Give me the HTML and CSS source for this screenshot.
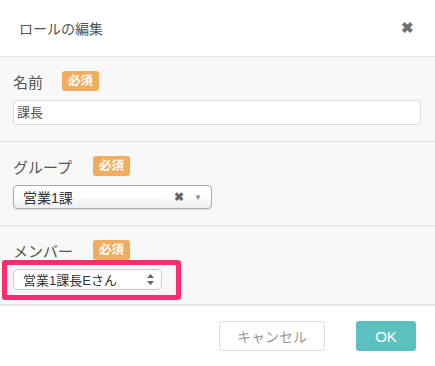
FILE: index.html
```html
<!DOCTYPE html>
<html lang="ja">
<head>
    <meta charset="UTF-8">
    <title>ロールの編集</title>
    <link rel="stylesheet" href="styles.css">
</head>
<body>
    <div class="modal">
        <div class="modal-header">
            <span class="modal-title">ロールの編集</span>
            <span class="close">&#10006;</span>
        </div>

        <div class="modal-body">
            <!-- 名前 -->
            <div class="section">
                <div class="label-row">
                    <span class="label">名前</span>
                    <span class="badge">必須</span>
                </div>
                <div class="text-input">課長</div>
            </div>

            <!-- グループ -->
            <div class="section">
                <div class="label-row">
                    <span class="label">グループ</span>
                    <span class="badge">必須</span>
                </div>
                <div class="select2">
                    <span class="select2-text">営業1課</span>
                    <span class="select2-clear">&#10006;</span>
                    <span class="select2-arrow">&#9660;</span>
                </div>
            </div>

            <!-- メンバー -->
            <div class="section last">
                <div class="label-row">
                    <span class="label">メンバー</span>
                    <span class="badge">必須</span>
                </div>
                <div class="highlight">
                    <div class="native-select">
                        <span>営業1課長Eさん</span>
                        <svg class="updown" width="7" height="11" viewBox="0 0 7 11">
                            <path d="M3.5 0 L7 4 L0 4 Z" fill="#666"/>
                            <path d="M3.5 11 L7 7 L0 7 Z" fill="#666"/>
                        </svg>
                    </div>
                </div>
            </div>
        </div>

        <div class="modal-footer">
            <button class="btn btn-cancel">キャンセル</button>
            <button class="btn btn-ok">OK</button>
        </div>
    </div>
</body>
</html>
```

FILE: styles.css
```css
body {
    margin: 0;
    font-family: "Helvetica Neue", "Liberation Sans", "Noto Sans CJK JP", sans-serif;
    background-color: #fff;
    color: #555;
}
.modal {
    width: 435px;
    height: 366px;
    display: flex;
    flex-direction: column;
}
.modal-header {
    height: 56px;
    padding: 0 21px 0 19px;
    display: flex;
    justify-content: space-between;
    align-items: center;
    border-bottom: 1px solid #e3e3e3;
    flex-shrink: 0;
}
.modal-title {
    font-size: 14px;
    color: #555;
}
.close {
    font-size: 15px;
    color: #707070;
    font-weight: bold;
}
.modal-body {
    background-color: #f8f8f8;
}
.section {
    padding: 14px 14px 16px 13px;
    border-bottom: 1px solid #e3e3e3;
    display: flex;
    flex-direction: column;
    align-items: flex-start;
    gap: 9px;
}
.section.last {
    gap: 0;
    padding-bottom: 4px;
}
.label-row {
    display: flex;
    align-items: center;
    height: 20px;
}
.label {
    font-size: 15px;
    color: #555;
    width: 49px;
}
.section:nth-child(2) .label,
.section.last .label {
    width: 80px;
}
.badge {
    background-color: #f0ad5e;
    color: #fff;
    font-size: 12.5px;
    font-weight: bold;
    border-radius: 3px;
    padding: 0 6px;
    height: 20px;
    line-height: 20px;
}
.text-input {
    box-sizing: border-box;
    width: 408px;
    height: 25px;
    background-color: #fff;
    border: 1px solid #ddd;
    border-radius: 3px;
    font-size: 13px;
    line-height: 23px;
    padding-left: 3px;
    color: #555;
}
.select2 {
    box-sizing: border-box;
    width: 199px;
    height: 24px;
    border: 1px solid #aaa;
    border-radius: 4px;
    background: linear-gradient(#fff 40%, #eee);
    display: flex;
    align-items: center;
    padding: 0 9px 0 9px;
    box-shadow: 0 1px 1px rgba(0, 0, 0, 0.1);
}
.select2-text {
    flex: 1;
    font-size: 14px;
    color: #333;
}
.select2-clear {
    font-size: 12px;
    font-weight: bold;
    color: #666;
    margin-right: 10px;
}
.select2-arrow {
    font-size: 8px;
    color: #888;
}
.highlight {
    margin-left: -11px;
    border: 5px solid #ff2d6e;
    border-radius: 3px;
    padding: 4px 14px 5px 6px;
}
.native-select {
    box-sizing: border-box;
    width: 149px;
    height: 21px;
    background-color: #fff;
    border: 1px solid #ccc;
    border-radius: 5px;
    display: flex;
    align-items: center;
    justify-content: space-between;
    padding: 0 7px 0 9px;
    font-size: 13px;
    color: #333;
}
.modal-footer {
    flex: 1;
    background-color: #fff;
    border-top: 1px solid #e3e3e3;
    display: flex;
    justify-content: flex-end;
    align-items: flex-start;
    padding: 15px 19px 0 0;
    gap: 31px;
}
.btn {
    font-family: inherit;
    font-size: 14px;
    height: 30px;
    border-radius: 3px;
    cursor: pointer;
}
.btn-cancel {
    width: 106px;
    background-color: #fff;
    border: 1px solid #ddd;
    color: #999;
}
.btn-ok {
    width: 60px;
    background-color: #5bc0be;
    border: none;
    color: #fff;
    font-size: 15px;
}
```
